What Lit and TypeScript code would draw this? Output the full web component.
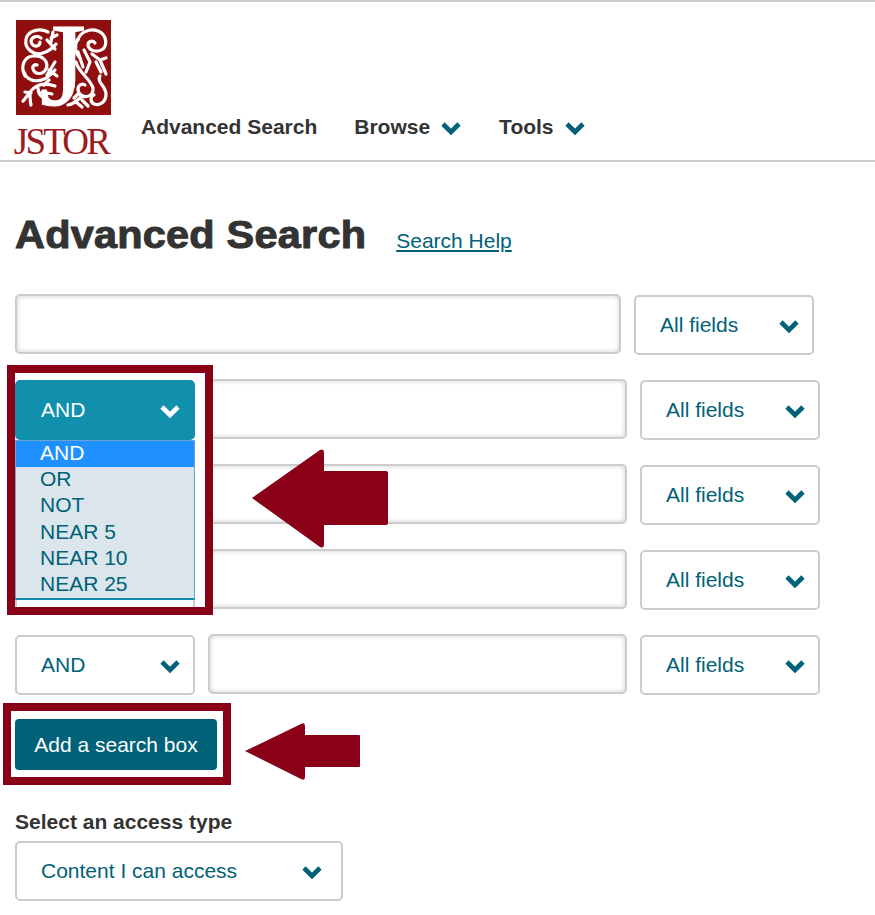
import { LitElement, html, css, svg } from "lit";
import { customElement } from "lit/decorators.js";

const chevron = () => html`<svg class="chev" viewBox="0 0 20 15" width="20" height="15" aria-hidden="true"><path d="M2 3 L10 11 L18 3" fill="none" stroke="currentColor" stroke-width="4.6"/></svg>`;

const ornaments = svg`
  <g fill="none" stroke="#fff" stroke-width="3.2" stroke-linecap="round" stroke-linejoin="round">
    <path d="M32 12 C24 8 12 10 10 19 C8 29 18 36 27 33 C33 31 37 28 40 24"/>
    <path d="M25 18 C19 14 13 19 16 24 C19 28 24 26 24 22"/>
    <path d="M37 12 L35 22 M31 20 L39 29 M35 18 L41 15"/>
    <path d="M9 56 C4 46 8 37 17 36 C27 35 33 42 30 49 C27 55 19 55 17 49 C16 46 19 44 21 45"/>
    <path d="M8 52 C11 62 26 66 39 50 M31 55 L39 42 M33 50 L41 56"/>
    <path d="M39 66 C28 62 20 64 14 72 C11 76 9 79 7 81 M14 72 C14 77 14 81 15 85 M22 68 C22 72 24 76 28 78 M26 72 L36 74 M28 65 L33 60 M9 72 L15 73"/>
    <path d="M62 20 C64 12 74 8 82 11 C90 14 92 24 87 29 C81 33 73 31 72 25 C72 21 77 20 79 23"/>
    <path d="M61 20 C58 28 60 34 64 38"/>
    <path d="M68 30 L74 42 L70 52 M76 34 L84 40 L90 38 M84 40 L90 54 M80 42 L85 52 M62 32 L67 47"/>
    <path d="M60 42 C62 52 74 58 77 68 C78 76 68 80 63 73 C60 68 64 62 69 65"/>
    <path d="M84 56 C80 62 90 66 90 74 C90 82 84 86 78 84 C74 82 74 76 78 75"/>
    <path d="M52 85 C58 84 62 80 66 76 M60 82 L66 87 M66 80 L72 86 M58 78 L62 74"/>
  </g>`;

@customElement("select-box")
class SelectBox extends LitElement {
  static properties = { label: {}, open: { type: Boolean, reflect: true }, wide: { type: Boolean, reflect: true } };
  declare label: string;
  declare open: boolean;
  declare wide: boolean;
  static styles = css`
    :host { display: block; flex: none; width: 180px; height: 60px; box-sizing: border-box; margin-top: 1px;
      border: 2px solid #ccc; border-radius: 5px; background: #fff; color: #006179;
      font: 21px "Liberation Sans", Arial, sans-serif; }
    :host([wide]) { width: 328px; }
    :host([open]) { background: #1190ae; border-color: #1190ae; color: #fff; }
    .in { display: flex; align-items: center; justify-content: space-between; height: 100%; padding: 0 13px 0 24px; }
    :host([wide]) .in { padding-right: 19px; }
    svg { display: block; margin-top: 2px; }
  `;
  render() {
    return html`<div class="in"><span>${this.label}</span>${chevron()}</div>`;
  }
}

@customElement("app-root")
export class AppRoot extends LitElement {
  static styles = css`
    :host { display: block; width: 875px; height: 915px; overflow: hidden; position: relative; background: #fff;
      font-family: "Liberation Sans", Arial, sans-serif; color: #333; }
    header { display: flex; align-items: flex-start; box-sizing: border-box;
      border-top: 2px solid #ccc; border-bottom: 2px solid #ccc; height: 162px; padding-left: 13px; }
    .logo { width: 98px; flex: none; padding-top: 18px; display: flex; flex-direction: column; align-items: center; }
    .logo svg { display: block; margin-left: 3px; overflow: visible; }
    .logo .J { font: 400 118px "Liberation Serif", serif; fill: #fff; stroke: #fff; stroke-width: 1.2px; }
    .wordmark { font: 400 37px/1 "Liberation Serif", serif; color: #9a1c20; letter-spacing: -2.8px; margin: 8px 0 0 -2px; white-space: nowrap; }
    nav { display: flex; align-items: center; margin: 112px 0 0 30px; font-weight: 700; font-size: 21px; line-height: 26px; }
    nav a { display: flex; align-items: center; color: #333; margin-right: 37px; }
    nav svg { color: #006179; margin: 2px 1px 0 11px; }
    .chev { display: block; }
    main { padding: 50px 0 0 15px; }
    .title { display: flex; align-items: baseline; margin: 0 0 36px; height: 46px; }
    h1 { margin: 0; font: 700 38px/46px "Liberation Sans", sans-serif; color: #333; letter-spacing: .22px; -webkit-text-stroke: 1px #333;
      transform: scaleX(1.09); transform-origin: left center; white-space: nowrap; }
    .help { margin-left: 59px; color: #006179; font-size: 21px; text-decoration: underline; }
    .row { display: flex; align-items: flex-start; gap: 13px; height: 85px; }
    .field { flex: none; height: 60px; box-sizing: border-box; width: 419px; border: 2px solid #ccc; border-radius: 5px;
      background: #fff; box-shadow: inset 0 0 5px rgba(0,0,0,.2); }
    .field.first { width: 606px; }
    .add { display: block; width: 202px; height: 51px; box-sizing: border-box; border: 0; border-radius: 4px; background: #006179;
      color: #fff; font: 21px "Liberation Sans", Arial, sans-serif; padding: 0; }
    label { display: block; margin-top: 40px; font-weight: 700; font-size: 21px; line-height: 24px; color: #333; }
    .access { margin-top: 7px; }
    .menu { position: absolute; left: 15px; top: 440px; width: 180px; height: 160px; box-sizing: border-box; list-style: none; margin: 0; padding: 0;
      background: #dae6ec; border: 1px solid #6fa3cf; border-bottom: 2px solid #1190ae; color: #006179; font-size: 21px; }
    .menu li { height: 26.2px; line-height: 24px; padding-left: 24px; }
    .menu li.sel { background: #1e90ff; color: #fff; }
    .mark { position: absolute; box-sizing: border-box; border: 8px solid #8a0016; }
    .m1 { left: 7px; top: 365px; width: 206px; height: 250px; }
    .m2 { left: 3px; top: 703px; width: 228px; height: 82px; }
    .arrow { position: absolute; display: block; }
    .a1 { left: 250px; top: 447px; }
    .a2 { left: 243px; top: 721px; }
  `;
  render() {
    const ops = ["AND", "OR", "NOT", "NEAR 5", "NEAR 10", "NEAR 25"];
    return html`
      <header>
        <div class="logo">
          <svg width="95" height="95" viewBox="0 0 95 95" role="img" aria-label="JSTOR logo">
            <rect width="95" height="95" fill="#8f0e0e"/>
            ${ornaments}
            <text class="J" x="24" y="85">J</text>
          </svg>
          <div class="wordmark">JSTOR</div>
        </div>
        <nav>
          <a>Advanced Search</a>
          <a>Browse ${chevron()}</a>
          <a>Tools ${chevron()}</a>
        </nav>
      </header>
      <main>
        <div class="title"><h1>Advanced Search</h1><a class="help">Search Help</a></div>
        <div class="row"><div class="field first"></div><select-box label="All fields"></select-box></div>
        <div class="row"><select-box label="AND" open></select-box><div class="field"></div><select-box label="All fields"></select-box></div>
        <div class="row"><select-box label=""></select-box><div class="field"></div><select-box label="All fields"></select-box></div>
        <div class="row"><select-box label=""></select-box><div class="field"></div><select-box label="All fields"></select-box></div>
        <div class="row"><select-box label="AND"></select-box><div class="field"></div><select-box label="All fields"></select-box></div>
        <button class="add">Add a search box</button>
        <label>Select an access type</label>
        <select-box class="access" label="Content I can access" wide></select-box>
      </main>
      <ul class="menu">${ops.map((o, i) => html`<li class=${i === 0 ? "sel" : ""}>${o}</li>`)}</ul>
      <div class="mark m1"></div>
      <div class="mark m2"></div>
      <svg class="arrow a1" width="142" height="104" viewBox="0 0 142 104"><path d="M2 51 L70 3 Q74 1 74 6 L74 24 L136 24 Q138 24 138 26 L138 76 Q138 78 136 78 L74 78 L74 97 Q74 102 70 100 Z" fill="#8a0016"/></svg>
      <svg class="arrow a2" width="120" height="62" viewBox="0 0 120 62"><path d="M2 30 L58 3 Q62 1 62 5 L62 14 L116 14 Q117 14 117 15 L117 45 Q117 46 116 46 L62 46 L62 56 Q62 60 58 58 Z" fill="#8a0016"/></svg>
    `;
  }
}
